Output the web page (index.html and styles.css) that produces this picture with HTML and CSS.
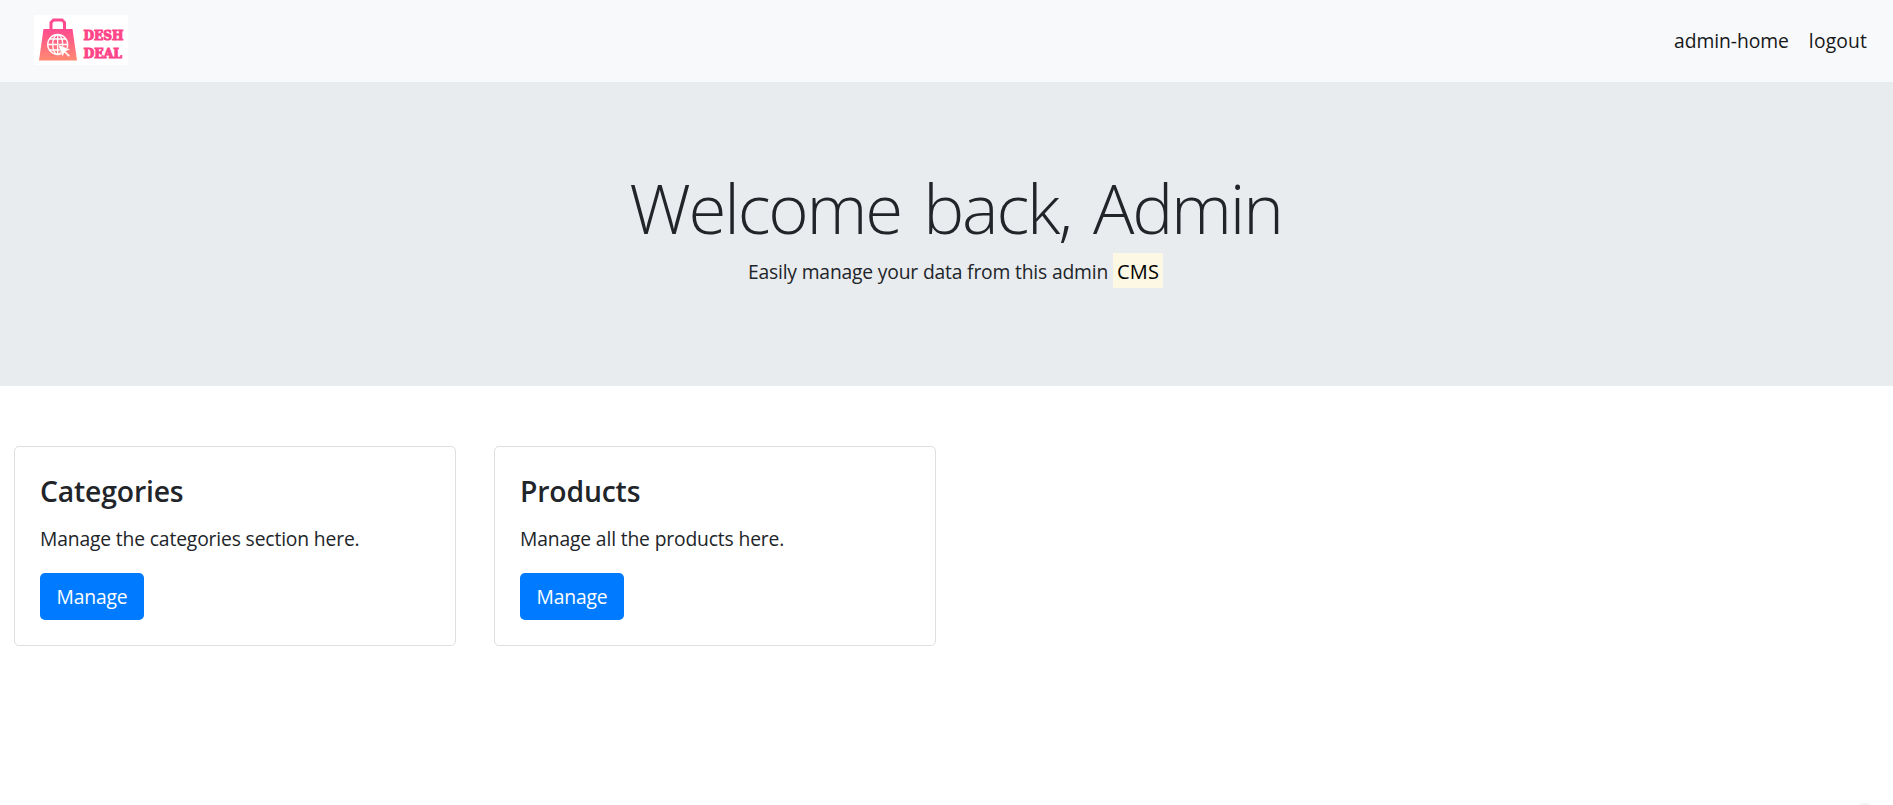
FILE: index.html
```html
<!DOCTYPE html>
<html lang="en">
<head>
<meta charset="utf-8">
<title>Desh Deal Admin</title>
<link rel="stylesheet" href="styles.css">
</head>
<body>
<nav class="navbar">
  <a class="brand">
    <svg class="logo" viewBox="0 0 94 50" role="img" aria-label="Desh Deal">
      <defs><linearGradient id="bag" x1="0" y1="0" x2="0" y2="1"><stop offset="0" stop-color="#ff4a90"/><stop offset="1" stop-color="#ff8a70"/></linearGradient></defs>
      <rect width="94" height="50" fill="#fff"/>
      <path d="M17 15V7.500L19.500 5H28L30.500 7.500V15" fill="none" stroke="#ff4a90" stroke-width="3"/>
      <path d="M9.500 14H38.500L43 45.500H5Z" fill="url(#bag)"/>
      <g fill="none" stroke="#fff" stroke-width="1.300">
        <circle cx="23.700" cy="29.500" r="10"/>
        <ellipse cx="23.700" cy="29.500" rx="5" ry="10"/>
        <path d="M23.700 19.500V39.500M13.700 29.500H33.700M15.500 24H32M15.500 35H31"/>
      </g>
      <path d="M24 29.500L36.500 34.500L31.800 36.300L36 40.500L34.500 42L30.500 37.800L28.500 42Z" fill="#fff" stroke="#ff7d78" stroke-width=".5"/>
      <g class="wordmark"><text x="49.500" y="24.700" textLength="40" lengthAdjust="spacingAndGlyphs">DESH</text><text x="49.500" y="42.700" textLength="38.500" lengthAdjust="spacingAndGlyphs">DEAL</text></g>
    </svg>
  </a>
  <div class="links"><a>admin-home</a><a class="link-logout">logout</a></div>
</nav>
<header class="hero">
  <h1 class="hero-title">Welcome back, Admin</h1>
  <p class="lead"><span class="lead-text">Easily manage your data from this admin</span><mark class="mark">CMS</mark></p>
</header>
<main class="cards">
  <section class="card">
    <h2 class="card-title">Categories</h2>
    <p class="card-text">Manage the categories section here.</p>
    <a class="btn">Manage</a>
  </section>
  <section class="card">
    <h2 class="card-title">Products</h2>
    <p class="card-text">Manage all the products here.</p>
    <a class="btn">Manage</a>
  </section>
</main>
<div class="corner-widget"></div>
</body>
</html>
```
FILE: styles.css
```css
* { box-sizing: border-box; }
body {
  height: 805px;
  margin: 0;
  overflow: hidden;
  background: #fff;
  color: #212529;
  font-family: "Open Sans", "Noto Sans", sans-serif;
  font-size: 19.3px;
  letter-spacing: -.15px;
  line-height: 30px;
}
h1, h2, p { margin: 0; }
.navbar {
  display: flex;
  justify-content: space-between;
  align-items: flex-start;
  height: 82px;
  padding: 15px 26px 0 34px;
  background: #f8f9fa;
}
.brand, .logo { display: block; }
.logo { width: 94px; height: 50px; overflow: visible; }
.wordmark {
  font: 900 13.5px "DejaVu Serif", serif;
  letter-spacing: 0;
  fill: #ff4488;
  stroke: #ff4488;
  stroke-width: 1.1px;
}
.links {
  display: flex;
  gap: 20px;
  padding-top: 11px;
  color: #16181b;
  letter-spacing: -.05px;
}
.link-logout { letter-spacing: .15px; }
.hero {
  display: flex;
  flex-direction: column;
  align-items: center;
  height: 304px;
  padding: 81px 0 0 18px;
  background: #e9ecef;
}
.hero-title {
  margin-bottom: 2px;
  font-size: 69px;
  font-weight: 300;
  letter-spacing: -2.2px;
  word-spacing: 6.5px;
  line-height: 88px;
  white-space: nowrap;
}
.lead { display: flex; align-items: center; gap: 5px; height: 35px; }
.lead-text { padding-top: 2px; letter-spacing: -.18px; }
.mark {
  height: 35px;
  padding: 4px 4px 0;
  background: #fcf8e3;
  color: #000;
  font-size: 20px;
  letter-spacing: .15px;
}
.cards {
  display: flex;
  gap: 38px;
  padding: 60px 14px 0;
}
.card {
  width: 442px;
  height: 200px;
  padding: 26px 25px 25px;
  border: 1px solid #dfdfdf;
  border-radius: 5px;
}
.card-title {
  margin-bottom: 15px;
  font-size: 28.3px;
  font-weight: 600;
  line-height: 36px;
}
.card-text { margin-bottom: 19px; }
.btn {
  display: flex;
  align-items: center;
  justify-content: center;
  width: 104px;
  height: 47px;
  border-radius: 5px;
  background: #007bff;
  color: #fff;
}
.corner-widget {
  position: absolute;
  top: 803px;
  left: 1853px;
  width: 24px;
  height: 24px;
  border-radius: 50%;
  background: #f3f3f3;
}
```
